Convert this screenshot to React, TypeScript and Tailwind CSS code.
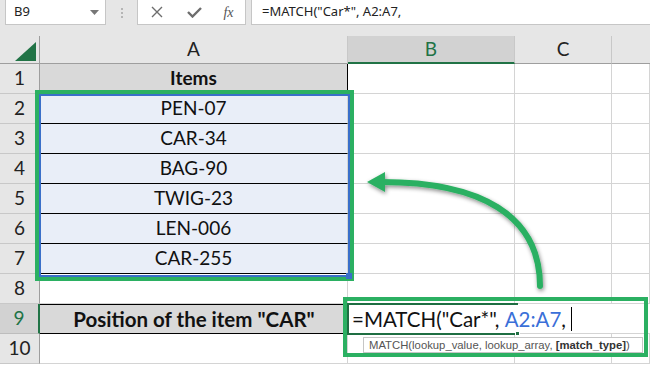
import React from 'react';

const cellFont = { fontFamily: 'Lato, "Open Sans", sans-serif' };
const uiFont = { fontFamily: '"Noto Sans", "Open Sans", sans-serif' };

const items = ['PEN-07', 'CAR-34', 'BAG-90', 'TWIG-23', 'LEN-006', 'CAR-255'];

const RowHead: React.FC<{ n: number; active?: boolean }> = ({ n, active }) => (
  <div
    className={
      active
        ? 'flex items-center justify-center bg-[#d2d2d2] border-b border-b-[#bdbdbd] border-r-2 border-r-[#217346] text-[#217346] text-[19px]'
        : 'flex items-center justify-center bg-[#e6e6e6] border-b border-b-[#c8c8c8] border-r border-r-[#9e9e9e] text-[#222] text-[19px]'
    }
  >
    {n}
  </div>
);

const Blank: React.FC = () => <div className="bg-white border-r border-b border-[#d4d4d4]" />;

const App: React.FC = () => {
  return (
    <div className="relative w-[650px] h-[367px] overflow-hidden bg-white" style={cellFont}>
      {/* formula bar */}
      <div className="h-[36px] bg-[#e6e6e6] flex items-start" style={uiFont}>
        <div className="ml-[5px] w-[101px] h-[25px] bg-white border border-[#c6c6c6] border-t-0 flex items-center justify-between pl-[8px] pr-[6px]">
          <span className="text-[13px] text-[#222]">B9</span>
          <svg width="9" height="5" viewBox="0 0 9 5">
            <polygon points="0,0 9,0 4.5,5" fill="#777" />
          </svg>
        </div>
        <div className="w-[31px] h-[25px] flex flex-col items-center justify-center gap-[2px]">
          <span className="w-[2px] h-[2px] bg-[#b5b5b5]" />
          <span className="w-[2px] h-[2px] bg-[#b5b5b5]" />
          <span className="w-[2px] h-[2px] bg-[#b5b5b5]" />
        </div>
        <div className="w-[109px] h-[25px] bg-white border border-[#c6c6c6] border-t-0 flex items-center">
          <div className="w-[38px] flex justify-center">
            <svg width="12" height="12" viewBox="0 0 12 12">
              <path d="M1 1 L11 11 M11 1 L1 11" stroke="#6d6d6d" strokeWidth="1.4" />
            </svg>
          </div>
          <div className="w-[36px] flex justify-center">
            <svg width="15" height="12" viewBox="0 0 15 12">
              <path d="M1 6 L5.5 10.5 L14 2" stroke="#6d6d6d" strokeWidth="2.4" fill="none" />
            </svg>
          </div>
          <div className="w-[33px] flex justify-center">
            <span className="italic text-[14px] text-[#555]" style={{ fontFamily: '"Liberation Serif", serif' }}>
              fx
            </span>
          </div>
        </div>
        <div className="ml-[5px] flex-1 h-[25px] bg-white border-l border-b border-[#c6c6c6] flex items-center pl-[10px]">
          <span className="text-[13px] text-[#222] whitespace-pre">=MATCH("Car*", A2:A7,</span>
        </div>
      </div>

      {/* sheet grid */}
      <div className="grid grid-cols-[40px_308px_167px_97px_1fr] grid-rows-[28px_repeat(10,30px)]">
        <div className="relative bg-[#e6e6e6] border-r border-b border-[#9e9e9e]">
          <svg className="absolute left-0 top-0" width="40" height="28" viewBox="0 0 40 28">
            <polygon points="15,25 36,25 36,6" fill="#217346" />
          </svg>
        </div>
        <div className="flex items-center justify-center bg-[#e6e6e6] border-r border-r-[#c8c8c8] border-b border-b-[#9e9e9e] text-[19px] text-[#222]">
          A
        </div>
        <div className="flex items-center justify-center bg-[#d2d2d2] border-r border-r-[#c8c8c8] border-b-2 border-b-[#217346] text-[19px] text-[#217346]">
          B
        </div>
        <div className="flex items-center justify-center bg-[#e6e6e6] border-r border-r-[#c8c8c8] border-b border-b-[#9e9e9e] text-[19px] text-[#222]">
          C
        </div>
        <div className="bg-[#e6e6e6] border-b border-b-[#9e9e9e]" />

        {/* row 1 */}
        <RowHead n={1} />
        <div className="flex items-center justify-center bg-[#d9d9d9] border-r border-r-black border-b border-b-black text-[19px] font-bold text-[#111]">
          Items
        </div>
        <Blank />
        <Blank />
        <Blank />

        {items.map((item, i) => (
          <React.Fragment key={item}>
            <RowHead n={i + 2} />
            <div className="flex items-center justify-center bg-[#e9eef8] border-r border-r-[#d4d4d4] border-b border-b-black text-[19px] text-[#111]">
              {item}
            </div>
            <Blank />
            <Blank />
            <Blank />
          </React.Fragment>
        ))}

        {/* row 8 */}
        <RowHead n={8} />
        <Blank />
        <Blank />
        <Blank />
        <Blank />

        {/* row 9 */}
        <RowHead n={9} active />
        <div className="flex items-center justify-center bg-[#d9d9d9] border-t border-t-black border-b border-b-black text-[20.5px] font-bold text-[#111]">
          Position of the item "CAR"
        </div>
        <div className="bg-white" />
        <div className="bg-white border-b border-[#d4d4d4]" />
        <div className="bg-white border-b border-[#d4d4d4]" />

        {/* row 10 */}
        <RowHead n={10} />
        <Blank />
        <Blank />
        <Blank />
        <Blank />
      </div>

      {/* selection around A2:A7 */}
      <div className="absolute left-[35px] top-[90px] w-[319px] h-[191px] border-4 border-[#2bb062]">
        <div className="w-full h-full border-2 border-[#3a6fc9]" />
        <div className="absolute right-[-2px] bottom-[-2px] w-[6px] h-[6px] bg-[#3a6fc9]" />
      </div>

      {/* edited formula in B9 */}
      <div className="absolute left-[347px] top-[303px] w-[171px] h-[32px] border-2 border-r-0 border-[#1e6e42]" />
      <div className="absolute left-[515px] top-[331px] w-[5px] h-[5px] bg-[#1e6e42] border border-white" />
      <div className="absolute left-[352px] top-[305px] h-[28px] flex items-center text-[20.5px] text-[#111] whitespace-pre">
        <span>=MATCH("Car*", </span>
        <span className="text-[#3a6fd8]">A2:A7</span>
        <span>, </span>
        <span className="w-px h-[24px] bg-black" />
      </div>

      {/* function tooltip */}
      <div
        className="absolute left-[363px] top-[337px] w-[280px] h-[16px] bg-white border border-[#c6c6c6] flex items-center pl-[5px] text-[11.3px] text-[#555] whitespace-pre overflow-hidden"
        style={{ fontFamily: '"Liberation Sans", Arial, sans-serif' }}
      >
        MATCH(lookup_value, lookup_array, <span className="font-bold text-[#333]">[match_type]</span>)
      </div>

      <div className="absolute left-[343px] top-[297px] w-[305px] h-[60px] border-4 border-[#2bb062]" />

      {/* curved arrow */}
      <svg className="absolute left-0 top-0 pointer-events-none" width="650" height="367" viewBox="0 0 650 367">
        <defs>
          <filter id="sh" x="-20%" y="-20%" width="140%" height="140%">
            <feDropShadow dx="1" dy="2" stdDeviation="2" floodColor="#000" floodOpacity="0.45" />
          </filter>
        </defs>
        <g filter="url(#sh)">
          <path d="M540 286 C540 215 480 182 382 182" stroke="#2bb062" strokeWidth="6" fill="none" strokeLinecap="round" />
          <polygon points="367,182 385,172 385,192" fill="#2bb062" />
        </g>
      </svg>
    </div>
  );
};

export default App;
